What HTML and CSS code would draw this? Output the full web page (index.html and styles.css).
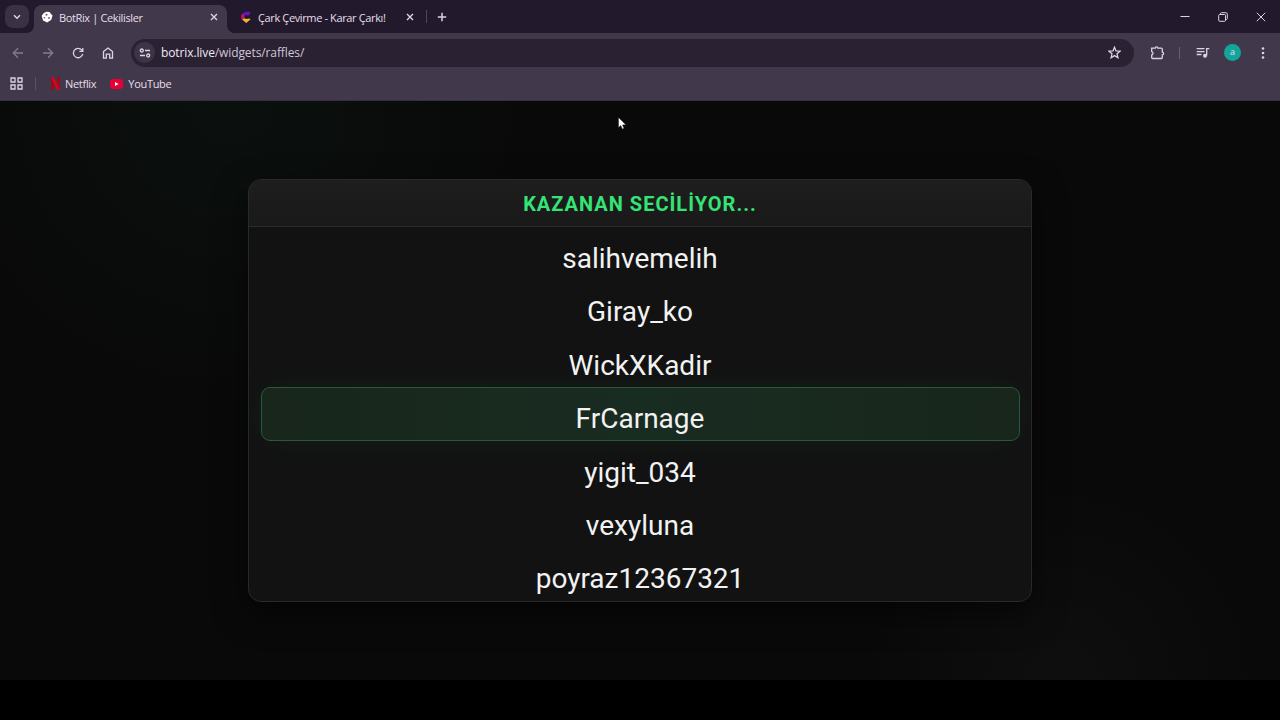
FILE: index.html
```html
<!DOCTYPE html>
<html lang="tr">
<head>
  <meta charset="UTF-8" />
  <meta name="viewport" content="width=device-width, initial-scale=1.0" />
  <title>BotRix | Cekilisler</title>
  <link rel="stylesheet" href="styles.css">
</head>
<body>
  <div class="tab-strip">
    <button class="tab-search" aria-label="Search tabs">
      <svg width="8" height="6" viewBox="0 0 8 6"><path d="M1 1.3l3 3 3-3" /></svg>
    </button>
    <div class="tab active">
      <svg class="favicon" width="12" height="12" viewBox="0 0 12 12">
        <path class="dice" d="M5.4.7 8.6 1 9.8 2.7 11.5 4.4 10.3 8.7 6.2 11.4 2 9.6.7 4.8 2.8 2z" />
        <circle class="pip" cx="5.5" cy="3.7" r="1" /><circle class="pip" cx="3.5" cy="6.8" r=".8" /><circle class="pip" cx="8" cy="7" r=".9" />
      </svg>
      <span class="tab-title">BotRix | Cekilisler</span>
      <svg class="close" width="8" height="8" viewBox="0 0 8 8"><path d="M1 1l6 6M7 1l-6 6" /></svg>
    </div>
    <div class="tab">
      <svg class="favicon" width="12" height="12" viewBox="0 0 12 12">
        <path fill="#6515bd" d="M2 3.4C3 .5 8 .2 10.4 1.1L9.5 4.3H5L4 5z" />
        <path fill="#c01269" d="M2 2.8 4.5 4.5v3L2.3 9C.5 7.500.7 4.600 2 2.800z" />
        <path fill="#f2b52d" d="M2.200 8.500 4.500 7.200 6 8l3.500-.4 1 .8L6.200 12z" />
      </svg>
      <span class="tab-title">Çark Çevirme - Karar Çarkı!</span>
      <svg class="close" width="8" height="8" viewBox="0 0 8 8"><path d="M1 1l6 6M7 1l-6 6" /></svg>
    </div>
    <span class="tab-divider"></span>
    <svg class="new-tab" width="10" height="10" viewBox="0 0 10 10"><path d="M5 .8v8.400M.8 5h8.400" /></svg>
    <div class="window-controls">
      <svg width="10" height="10" viewBox="0 0 10 10"><path d="M.5 4.500h9" /></svg>
      <svg width="10" height="10" viewBox="0 0 10 10"><rect x=".7" y="2.500" width="6.800" height="6.800" rx="1" /><path d="M2.500 2.300V1.700q0-1 1-1h4.300q1.500 0 1.500 1.500v4.300q0 1-1 1h-.6" /></svg>
      <svg width="10" height="10" viewBox="0 0 10 10"><path d="M.8.8l8.400 8.400M9.200.8.800 9.200" /></svg>
    </div>
  </div>

  <div class="toolbar">
    <div class="nav">
      <svg class="disabled" width="12" height="12" viewBox="0 0 12 12"><path d="M11 6H1.500M6 1.300 1.300 6 6 10.700" /></svg>
      <svg class="disabled" width="12" height="12" viewBox="0 0 12 12"><path d="M1 6h9.500M6 1.300 10.700 6 6 10.700" /></svg>
      <svg width="12" height="12" viewBox="0 0 12 12"><path d="M10.700 7A4.700 4.700 0 1 1 9.800 3.100L10.700 4.200M10.800 1v3.400H7.400" /></svg>
      <svg width="12" height="12" viewBox="0 0 12 12"><path d="M1.500 4.600 6 1.100l4.500 3.500v6.500H7.700V7.200H4.300v3.900H1.500z" /></svg>
    </div>
    <div class="omnibox">
      <span class="site-info">
        <svg width="12" height="10" viewBox="0 0 12 10"><circle cx="2.800" cy="2.500" r="1.500" /><path d="M6 2.500h5M1 7.500h5" /><circle cx="9.200" cy="7.500" r="1.500" /></svg>
      </span>
      <span class="url"><span class="host">botrix.live</span>/widgets/raffles/</span>
      <svg class="star" width="13" height="13" viewBox="0 0 13 13"><path d="M6.500 1.200l1.500 3.700 4 .3-3 2.600.9 3.900-3.400-2.100-3.400 2.100L4 7.800 1 5.200l4-.3z" /></svg>
    </div>
    <div class="actions">
      <svg width="15" height="15" viewBox="0 0 15 15"><path d="M1.700 3.200h3.500a1.300 1.300 0 0 1 2.600 0h3.500q1 0 1 1v3a1.300 1.300 0 0 1 0 2.600v2.700q0 1-1 1H2.700q-1 0-1-1V10a1.700 1.700 0 0 0 0-3.300z" /></svg>
      <span class="action-divider"></span>
      <svg width="14" height="12" viewBox="0 0 14 12"><path d="M.7 1.700h7.800M.7 4.600h7.800M.7 7.500h4.800M10.700 8.500V1.700h2.600" /><circle class="solid" cx="9" cy="8.800" r="2" /></svg>
      <span class="avatar">a</span>
      <svg class="dots" width="4" height="12" viewBox="0 0 4 12"><circle cx="2" cy="1.500" r="1.300" /><circle cx="2" cy="6" r="1.300" /><circle cx="2" cy="10.500" r="1.300" /></svg>
    </div>
  </div>

  <div class="bookmarks">
    <svg class="apps" width="13" height="13" viewBox="0 0 13 13"><path d="M1 1h4v4H1zM8 1h4v4H8zM1 8h4v4H1zM8 8h4v4H8z" /></svg>
    <span class="bookmark-divider"></span>
    <a class="bookmark netflix">
      <svg width="9" height="13" viewBox="0 0 9 13"><path fill="#9c0b1c" d="M0 0h3v13H0zM6 0h3v13H6z" /><path fill="#d0071e" d="M0 0h3l6 13H6z" /></svg>
      Netflix
    </a>
    <a class="bookmark">
      <svg width="13" height="10" viewBox="0 0 13 10"><rect width="13" height="10" rx="3" fill="#e60033" /><path fill="#fff" d="M5 3l3.600 2L5 7z" /></svg>
      YouTube
    </a>
  </div>

  <main class="page">
    <section class="raffle">
      <h1>KAZANAN SECİLİYOR...</h1>
      <ul class="reel">
        <li>salihvemelih</li>
        <li>Giray_ko</li>
        <li>WickXKadir</li>
        <li>FrCarnage</li>
        <li>yigit_034</li>
        <li>vexyluna</li>
        <li>poyraz12367321</li>
      </ul>
      <div class="marker"></div>
    </section>
  </main>

  <svg class="cursor" width="9" height="13" viewBox="0 0 9 13"><path d="M.5.500v10l2.300-2 1.500 3.500 1.700-.8L4.500 7.900l3.300-.2z" /></svg>
</body>
</html>
```
FILE: styles.css
```css
:root {
  --strip: #23192d;
  --toolbar: #41394b;
  --field: #2a2133;
  --icon: #dcd4e3;
  --text: #e6dfea;
  --green: #35e376;
}
* {
  box-sizing: border-box;
}
body {
  margin: 0;
  width: 1280px;
  height: 720px;
  overflow: hidden;
  background: #000;
  color: var(--text);
  font-family: 'Open Sans', 'Noto Sans', sans-serif;
  display: flex;
  flex-direction: column;
}
svg {
  flex: none;
  fill: none;
  stroke: var(--icon);
  stroke-width: 1.3;
}

/* tabs */
.tab-strip {
  height: 33px;
  flex: none;
  background: var(--strip);
  display: flex;
  align-items: center;
  padding-left: 5px;
}
.tab-search {
  width: 24px;
  height: 23px;
  border: none;
  border-radius: 8px;
  padding: 0;
  background: #3a3144;
  display: flex;
  align-items: center;
  justify-content: center;
}
.tab-search svg {
  stroke-width: 1.5;
}
.tab {
  height: 28px;
  width: 198px;
  display: flex;
  align-items: center;
  align-self: flex-end;
  padding: 0 11px 4px 13px;
}
.tab.active {
  width: 193px;
  margin-left: 5px;
  padding: 0 9px 4px 7px;
  background: var(--toolbar);
  border-radius: 8px 8px 0 0;
  position: relative;
}
/* curved feet of the selected tab */
.tab.active::before,
.tab.active::after {
  content: "";
  position: absolute;
  bottom: 0;
  width: 7px;
  height: 7px;
}
.tab.active::before {
  left: -7px;
  background: radial-gradient(circle at 0 0, transparent 6.5px, var(--toolbar) 7px);
}
.tab.active::after {
  right: -7px;
  background: radial-gradient(circle at 100% 0, transparent 6.5px, var(--toolbar) 7px);
}
.favicon {
  stroke: none;
}
.dice {
  fill: #fff;
}
.pip {
  fill: #655d6d;
}
.tab-title {
  flex: 1;
  margin-left: 6px;
  font-size: 11px;
  letter-spacing: -0.37px;
  white-space: nowrap;
}
.close {
  stroke-width: 1.4;
}
.tab-divider {
  width: 1px;
  height: 13px;
  margin-left: 1px;
  background: #51475b;
}
.new-tab {
  margin-left: 10px;
  stroke-width: 1.5;
}
.window-controls {
  display: flex;
  gap: 28px;
  margin-left: auto;
  margin-right: 14px;
}
.window-controls svg {
  stroke-width: 1;
}

/* address bar */
.toolbar {
  height: 39px;
  flex: none;
  background: linear-gradient(var(--strip), var(--strip)) 100% 0 / 5px 5px no-repeat, var(--toolbar);
  background: var(--toolbar);
  display: flex;
  align-items: center;
}
.nav {
  display: flex;
  gap: 18px;
  padding-left: 12px;
}
.disabled {
  stroke: #857a8e;
}
.omnibox {
  width: 1003px;
  height: 28px;
  margin-left: 17px;
  padding: 0 13px 0 3px;
  border-radius: 14px;
  background: var(--field);
  display: flex;
  align-items: center;
}
.site-info {
  width: 21px;
  height: 21px;
  border-radius: 50%;
  background: #3d3547;
  display: flex;
  align-items: center;
  justify-content: center;
}
.url {
  flex: 1;
  margin-left: 6px;
  color: #cfc6d5;
  font-size: 12px;
  letter-spacing: -0.11px;
}
.host {
  color: #f0eaf4;
}
.actions {
  display: flex;
  align-items: center;
  margin-left: 16px;
}
.action-divider {
  width: 1px;
  height: 12px;
  margin: 0 16px 0 14px;
  background: #685b72;
}
.solid {
  fill: var(--icon);
  stroke: none;
}
.avatar {
  width: 17px;
  height: 17px;
  margin: 0 20px 0 14px;
  border-radius: 50%;
  background: #12a59b;
  font-size: 9px;
  line-height: 16px;
  text-align: center;
}
.dots {
  fill: var(--icon);
  stroke: none;
}

/* bookmarks */
.bookmarks {
  height: 29px;
  flex: none;
  background: var(--toolbar);
  border-bottom: 1px solid #35303b;
  display: flex;
  align-items: center;
  padding: 0 0 5px 10px;
  font-size: 11px;
  letter-spacing: -0.3px;
}
.bookmark-divider {
  width: 1px;
  height: 13px;
  margin: 0 15px 0 12px;
  background: #5b5065;
}
.bookmark {
  display: flex;
  align-items: center;
  gap: 5px;
}
.bookmark svg {
  stroke: none;
}
.netflix {
  margin-right: 14px;
}

/* raffle widget */
.page {
  height: 579px;
  flex: none;
  padding-top: 78px;
  background:
    radial-gradient(circle at 18% 0, rgba(20, 55, 40, 0.16), transparent 300px),
    radial-gradient(circle at 83% 100%, rgba(40, 40, 40, 0.18), transparent 200px),
    #090909;
}
.raffle {
  position: relative;
  width: 784px;
  height: 423px;
  margin: 0 auto;
  overflow: hidden;
  background: #121212;
  border: 1px solid #292929;
  border-radius: 13px;
  box-shadow: 0 12px 32px rgba(0, 0, 0, 0.5);
  font-family: Roboto, sans-serif;
}
.raffle h1 {
  height: 47px;
  margin: 0;
  border-bottom: 1px solid #2b2b2b;
  background: linear-gradient(#1e1e1e, #191919);
  color: var(--green);
  font-size: 20px;
  font-weight: 700;
  letter-spacing: 1px;
  line-height: 48px;
  text-align: center;
}
.reel {
  position: relative;
  z-index: 1;
  list-style: none;
  margin: 0;
  padding: 5px 0 0;
  color: #f2f2f2;
  font-size: 28px;
  text-align: center;
}
.reel li {
  height: 53.4px;
  line-height: 53.4px;
}
/* winning slot, sits behind the names */
.marker {
  position: absolute;
  top: 207px;
  left: 12px;
  right: 11px;
  height: 54px;
  border: 1px solid #28593c;
  border-radius: 9px;
  background: linear-gradient(90deg, #18261b, #192c21 50%, #18261b);
  box-shadow: 0 0 32px rgba(53, 227, 118, 0.06);
}
.cursor {
  position: absolute;
  top: 117px;
  left: 618px;
  fill: #fff;
  stroke: #111;
  stroke-width: 0.4;
}
```
